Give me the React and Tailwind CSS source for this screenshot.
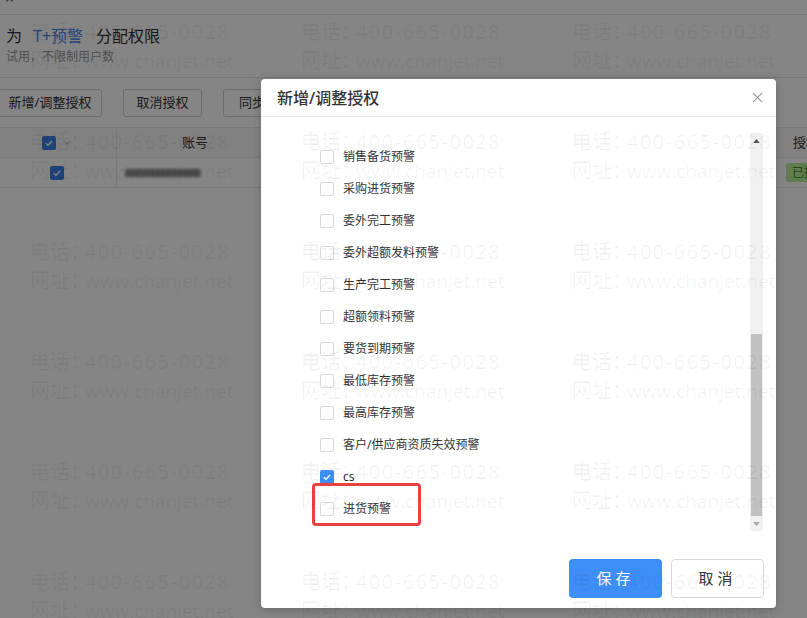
const ITEMS = [
  { label: '销售备货预警' },
  { label: '采购进货预警' },
  { label: '委外完工预警' },
  { label: '委外超额发料预警' },
  { label: '生产完工预警' },
  { label: '超额领料预警' },
  { label: '要货到期预警' },
  { label: '最低库存预警' },
  { label: '最高库存预警' },
  { label: '客户/供应商资质失效预警' },
  { label: 'cs', checked: true },
  { label: '进货预警' },
]

function Check({ checked, blue = 'bg-[#3d8ff7]' }) {
  if (checked) {
    return (
      <span className={`flex h-[14px] w-[14px] shrink-0 items-center justify-center rounded-[2px] ${blue}`}>
        <svg viewBox="0 0 12 12" className="h-[10px] w-[10px]">
          <path d="M2.2 6.2l2.5 2.5L9.8 3.5" fill="none" stroke="white" strokeWidth="1.8" />
        </svg>
      </span>
    )
  }
  return <span className="h-[14px] w-[14px] shrink-0 rounded-[2px] border border-[#d9d9d9] bg-white" />
}

// background page, dimmed by the modal mask
function Page() {
  return (
    <div className="text-[#333]">
      <div className="h-[15px] overflow-hidden border-b border-[#e3e3e3] pl-[5px]">
        <div className="-mt-[12px] text-[16px] leading-[20px] text-[#555]">×</div>
      </div>
      <div className="border-b border-[#e3e3e3] px-[6px] pb-[11px] pt-[9px]">
        <div className="flex text-[16px] leading-[24px]">
          <span>为</span>
          <span className="ml-[11px] text-[#4d86e6]">T+预警</span>
          <span className="ml-[13px]">分配权限</span>
        </div>
        <div className="text-[12px] leading-[18px] text-[#999]">试用，不限制用户数</div>
      </div>
      <div className="-ml-[2px] mt-[11px] flex gap-[21px]">
        <button className="h-[28px] w-[104px] rounded-[3px] border border-[#d0d0d0] bg-white text-[13px]">新增/调整授权</button>
        <button className="h-[28px] w-[79px] rounded-[3px] border border-[#d0d0d0] bg-white text-[13px]">取消授权</button>
        <button className="h-[28px] w-[104px] rounded-[3px] border border-[#d0d0d0] bg-white pl-[15px] text-left text-[13px]">同步授权</button>
      </div>
      <div className="mt-[10px] text-[13px]">
        <div className="flex h-[31px] items-center border-y border-[#e6e6e6] bg-[#f8f8f8]">
          <div className="flex h-full w-[117px] items-center gap-[7px] border-r border-[#e6e6e6] pl-[42px]">
            <Check checked blue="bg-[#3a7fe8]" />
            <svg viewBox="0 0 10 6" className="h-[5px] w-[9px]">
              <path d="M1 1l4 4 4-4" fill="none" stroke="#aaa" strokeWidth="1.2" />
            </svg>
          </div>
          <div className="w-[156px] text-center">账号</div>
          <div className="flex-1" />
          <div className="w-[21px] whitespace-nowrap pl-[7px]">授权状态</div>
        </div>
        <div className="flex h-[30px] items-center border-b border-[#e6e6e6]">
          <div className="flex h-full w-[117px] items-center border-r border-[#e6e6e6] pl-[50px]">
            <Check checked blue="bg-[#3a7fe8]" />
          </div>
          <div className="w-[156px] pl-[8px]">
            <div className="h-[8px] w-[76px] rounded-[2px] bg-[#8a8a8a] blur-[1.5px]" />
          </div>
          <div className="flex-1" />
          <div className="w-[21px]">
            <span className="block h-[19px] w-[40px] whitespace-nowrap rounded-[3px] bg-[#b8ee9a] pl-[6px] text-[12px] leading-[19px] text-[#3f8f1a]">
              已授权
            </span>
          </div>
        </div>
      </div>
    </div>
  )
}

function Scrollbar() {
  return (
    <div className="mr-[13px] mt-[16px] mb-[4px] flex w-[13px] flex-col bg-[#f1f1f1]">
      <div className="flex h-[16px] items-center justify-center">
        <svg viewBox="0 0 8 5" className="h-[4px] w-[7px]"><path d="M0 5L4 0l4 5z" fill="#505050" /></svg>
      </div>
      <div className="h-[185px]" />
      <div className="mx-[1px] h-[182px] bg-[#c1c1c1]" />
      <div className="flex flex-1 items-center justify-center">
        <svg viewBox="0 0 8 5" className="h-[4px] w-[7px]"><path d="M0 0l4 5 4-5z" fill="#a3a3a3" /></svg>
      </div>
    </div>
  )
}

function Modal() {
  return (
    <div className="relative ml-[261px] mt-[79px] flex h-[529px] w-[515px] flex-col rounded-[4px] bg-white shadow-[0_2px_10px_rgba(0,0,0,0.2)]">
      <div className="flex h-[38px] shrink-0 items-center justify-between border-b border-[#e8e8e8] pl-[16px] pr-[13px]">
        <span className="text-[16px] font-medium text-[#333]">新增/调整授权</span>
        <svg viewBox="0 0 12 12" className="h-[11px] w-[11px]">
          <path d="M1 1l10 10M11 1L1 11" stroke="#999" strokeWidth="1.3" />
        </svg>
      </div>
      <div className="flex h-[418px] shrink-0 overflow-hidden">
        <div className="flex-1 pl-[59px] pt-[24px]">
          {ITEMS.map(item => (
            <div key={item.label} className="flex h-[32px] items-center gap-[9px] text-[12px] text-[#333]">
              <Check checked={item.checked} />
              <span>{item.label}</span>
            </div>
          ))}
        </div>
        <Scrollbar />
      </div>
      <div className="flex justify-end gap-[9px] pr-[12px] pt-[24px]">
        <button className="h-[39px] w-[93px] rounded-[4px] bg-[#3d8ff7] text-[15px] tracking-[4px] text-white">保存</button>
        <button className="h-[39px] w-[93px] rounded-[4px] border border-[#d9d9d9] bg-white text-[15px] tracking-[4px] text-[#333]">取消</button>
      </div>
      {/* red annotation */}
      <div className="absolute left-[51px] top-[404px] h-[43px] w-[109px] rounded-[4px] border-[3px] border-[#e8413f]" />
    </div>
  )
}

function Watermark() {
  const cells = Array.from({ length: 18 })
  return (
    <div className="pointer-events-none absolute inset-0 grid grid-cols-[repeat(3,271px)] auto-rows-[110px] overflow-hidden pl-[30px] pt-[17px] text-black/[0.06]">
      {cells.map((_, i) => (
        <div key={i} className="whitespace-nowrap text-[20px] leading-[29px]">
          <div>
            <span className="-mr-[5px]">电话：</span>
            <span className="font-['Open_Sans',sans-serif] tracking-[1.5px]">400-665-0028</span>
          </div>
          <div>
            <span className="-mr-[5px]">网址：</span>
            <span className="font-['Open_Sans',sans-serif] text-[19px]">www.chanjet.net</span>
          </div>
        </div>
      ))}
    </div>
  )
}

export default function App() {
  return (
    <div className="relative h-[618px] w-[807px] overflow-hidden bg-white font-['Noto_Sans','Noto_Sans_CJK_SC',sans-serif]">
      <Page />
      <div className="absolute inset-0 bg-black/[0.48]">
        <Modal />
      </div>
      <Watermark />
    </div>
  )
}
